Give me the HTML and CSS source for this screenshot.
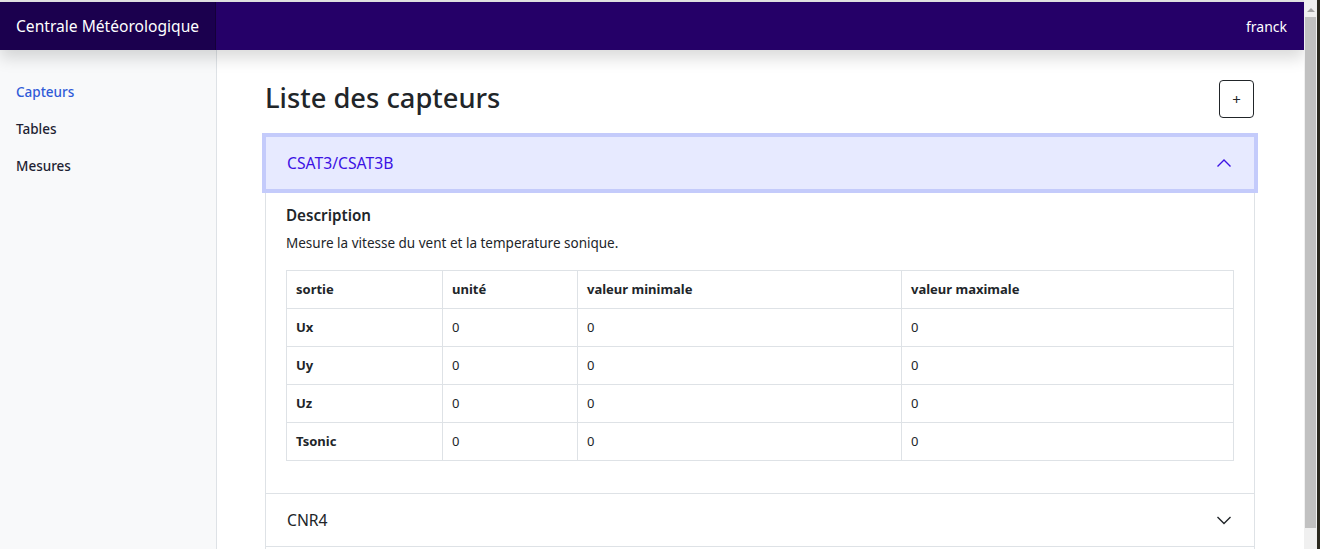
FILE: index.html
```html
<!DOCTYPE html>
<html lang="fr">
<head>
<meta charset="utf-8">
<title>Centrale Météorologique</title>
<link rel="stylesheet" href="styles.css">
</head>
<body>
<div class="screen">
  <div class="app">
    <div class="topline"></div>
    <header class="navbar">
      <a class="brand" href="#">Centrale Météorologique</a>
      <span class="user">franck</span>
    </header>
    <div class="layout">
      <nav class="sidebar">
        <a class="nav-link active" href="#">Capteurs</a>
        <a class="nav-link" href="#">Tables</a>
        <a class="nav-link" href="#">Mesures</a>
      </nav>
      <main class="main">
        <div class="title-row">
          <h2 class="title">Liste des capteurs</h2>
          <button class="btn-add" type="button">+</button>
        </div>
        <div class="accordion">
          <div class="acc-item">
            <div class="acc-header open">
              <span>CSAT3/CSAT3B</span>
              <svg class="chev" width="16" height="16" viewBox="0 0 16 16"><path d="M1.5 11.5 L8 5 L14.5 11.5" fill="none" stroke="currentColor" stroke-width="1.4"/></svg>
            </div>
            <div class="acc-body">
              <h5 class="desc-title">Description</h5>
              <p class="desc">Mesure la vitesse du vent et la temperature sonique.</p>
              <table class="tbl">
                <colgroup>
                  <col class="c1"><col class="c2"><col class="c3"><col class="c4">
                </colgroup>
                <thead>
                  <tr><th>sortie</th><th>unité</th><th>valeur minimale</th><th>valeur maximale</th></tr>
                </thead>
                <tbody>
                  <tr><th>Ux</th><td>0</td><td>0</td><td>0</td></tr>
                  <tr><th>Uy</th><td>0</td><td>0</td><td>0</td></tr>
                  <tr><th>Uz</th><td>0</td><td>0</td><td>0</td></tr>
                  <tr><th>Tsonic</th><td>0</td><td>0</td><td>0</td></tr>
                </tbody>
              </table>
            </div>
          </div>
          <div class="acc-item">
            <div class="acc-header">
              <span>CNR4</span>
              <svg class="chev" width="16" height="16" viewBox="0 0 16 16"><path d="M1.5 5 L8 11.5 L14.5 5" fill="none" stroke="currentColor" stroke-width="1.4"/></svg>
            </div>
          </div>
          <div class="acc-item">
            <div class="acc-header">
              <span></span>
              <svg class="chev" width="16" height="16" viewBox="0 0 16 16"><path d="M1.5 5 L8 11.5 L14.5 5" fill="none" stroke="currentColor" stroke-width="1.4"/></svg>
            </div>
          </div>
        </div>
      </main>
    </div>
  </div>
  <div class="scrollbar">
    <div class="sb-arrow"></div>
    <div class="sb-thumb"></div>
  </div>
  <div class="edge"></div>
</div>
</body>
</html>
```

FILE: styles.css
```css
* { box-sizing: border-box; }
html, body { margin: 0; padding: 0; height: 100%; overflow: hidden; }
body {
  font-family: "Noto Sans", "Open Sans", sans-serif;
  color: #212529;
  background: #fff;
}
.screen { display: flex; height: 549px; width: 1320px; }
.app { flex: 1; display: flex; flex-direction: column; min-width: 0; overflow: hidden; }
.topline { height: 2px; background: #e4e4e4; flex: none; }
.navbar {
  flex: none;
  height: 48px;
  display: flex;
  align-items: center;
  justify-content: space-between;
  background: #250068;
  box-shadow: 0 8px 16px rgba(0,0,0,.15);
  position: relative;
  z-index: 2;
}
.brand {
  width: 216px;
  height: 48px;
  display: flex;
  align-items: center;
  padding-left: 16px;
  color: #fff;
  font-size: 15.6px;
  text-decoration: none;
  background: rgba(0,0,0,.25);
  box-shadow: inset -1px 0 0 rgba(0,0,0,.25);
}
.user { color: #fff; font-size: 14px; padding-right: 17px; }
.layout { flex: 1; display: flex; min-height: 0; }
.sidebar {
  width: 217px;
  flex: none;
  background: #f8f9fa;
  border-right: 1px solid #dee2e6;
  padding-top: 24px;
  display: flex;
  flex-direction: column;
}
.nav-link {
  display: block;
  padding: 8px 16px;
  font-size: 13.5px;
  line-height: 21px;
  font-weight: 500;
  color: #1f1f33;
  text-decoration: none;
}
.nav-link.active { color: #2f5bd8; }
.main { flex: 1; padding: 30px 49px 0 48px; min-width: 0; }
.title-row {
  display: flex;
  align-items: center;
  justify-content: space-between;
  height: 37px;
  margin-bottom: 19px;
}
.title { margin: 0; font-size: 27.3px; font-weight: 500; line-height: 1.2; color: #212529; }
.btn-add {
  width: 35px;
  height: 38px;
  margin-right: 1px;
  border: 1px solid #212529;
  border-radius: 4px;
  background: #fff;
  color: #212529;
  font-size: 15px;
  font-family: inherit;
  padding: 0;
}
.accordion { border: 1px solid #dee2e6; border-radius: 0; }
.acc-item { border-bottom: 1px solid #dee2e6; }
.acc-header {
  height: 52px;
  display: flex;
  align-items: center;
  justify-content: space-between;
  padding: 0 22px 0 21px;
  font-size: 15.7px;
  color: #212529;
  background: #fff;
}
.acc-header .chev { color: #212529; }
.acc-header.open {
  background: #e7eaff;
  color: #3c12e4;
  box-shadow: 0 0 0 4px #c4cbfb;
  position: relative;
  z-index: 1;
}
.acc-header.open .chev { color: #3c12e4; }
.acc-body { padding: 17px 20px 16px; }
.desc-title { margin: 0 0 9px; font-size: 15.2px; font-weight: 600; line-height: 1.2; }
.desc { margin: 0 0 17px; font-size: 13.5px; line-height: 1.5; }
.tbl {
  width: 100%;
  border-collapse: collapse;
  font-size: 13px;
  line-height: 21px;
  margin-bottom: 16px;
}
.tbl th, .tbl td {
  border: 1px solid #dee2e6;
  padding: 8px 9px;
  text-align: left;
  height: 38px;
}
.tbl th { font-weight: 700; }
.tbl td { font-weight: 400; }
.c1 { width: 156px; }
.c2 { width: 135px; }
.c3 { width: 324px; }
.scrollbar {
  width: 13px;
  flex: none;
  background: #f0f0f0;
  display: flex;
  flex-direction: column;
  align-items: center;
  padding-top: 8px;
}
.sb-arrow {
  width: 0; height: 0;
  border-left: 4px solid transparent;
  border-right: 4px solid transparent;
  border-bottom: 4px solid #a3a3a3;
}
.sb-thumb { width: 11px; height: 511px; margin-top: 5px; background: #c1c1c1; }
.edge { width: 3px; flex: none; background: #2b291f; }
```
